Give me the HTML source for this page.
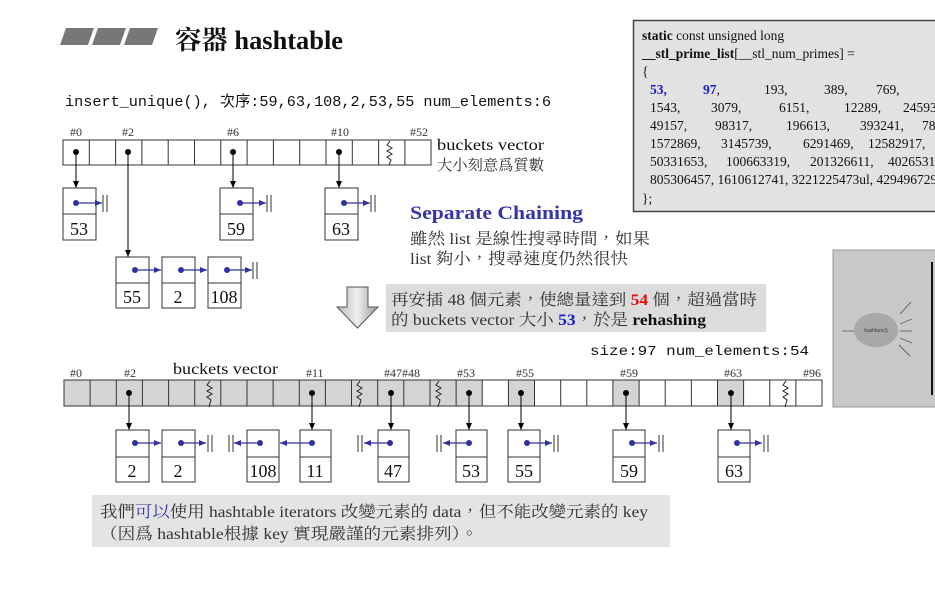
<!DOCTYPE html>
<html><head><meta charset="utf-8">
<style>
html,body{margin:0;padding:0;background:#fff;}
body{width:935px;height:602px;overflow:hidden;position:relative;}
svg{position:absolute;left:0;top:0;}
.t{font-family:"Liberation Serif","Noto Serif CJK TC","Noto Serif CJK SC",serif;}
.m{font-family:"Liberation Mono","DejaVu Sans Mono","Noto Sans CJK TC",monospace;}
</style></head><body>
<svg width="935" height="602" viewBox="0 0 935 602" xmlns="http://www.w3.org/2000/svg">
<defs>
<marker id="ab" markerWidth="8" markerHeight="8" refX="7" refY="4" orient="auto" markerUnits="userSpaceOnUse"><path d="M0,1 L7,4 L0,7 z" fill="#000"/></marker>
<marker id="au" markerWidth="8" markerHeight="8" refX="7" refY="4" orient="auto" markerUnits="userSpaceOnUse"><path d="M0,1 L7,4 L0,7 z" fill="#3030a0"/></marker>
<linearGradient id="ag" x1="0" x2="1"><stop offset="0" stop-color="#bbb"/><stop offset="0.5" stop-color="#eee"/><stop offset="1" stop-color="#999"/></linearGradient>
</defs>

<g fill="#777">
<polygon points="66,28 94,28 88,45 60,45"/>
<polygon points="98,28 126,28 120,45 92,45"/>
<polygon points="130,28 158,28 152,45 124,45"/>
</g>
<text x="175" y="49" class="t" font-size="26" font-weight="bold" fill="#111" textLength="168" lengthAdjust="spacingAndGlyphs">容器 hashtable</text>

<text x="65" y="106" class="m" font-size="15" fill="#111" textLength="486" lengthAdjust="spacingAndGlyphs">insert_unique(), 次序:59,63,108,2,53,55 num_elements:6</text>

<g class="t" font-size="12" fill="#333">
<text x="70" y="136">#0</text><text x="122" y="136">#2</text><text x="227" y="136">#6</text><text x="331" y="136">#10</text><text x="410" y="136">#52</text>
</g>
<g stroke="#333" stroke-width="1" fill="none">
<rect x="63" y="140" width="368" height="25" fill="#fff"/>
<path d="M89.3,140V165M115.6,140V165M141.9,140V165M168.2,140V165M194.5,140V165M220.8,140V165M247.1,140V165M273.4,140V165M299.7,140V165M326,140V165M352.3,140V165M378.6,140V165M404.9,140V165"/>
</g>
<path d="M390,141 l-3,4 l5,3 l-5,3 l5,3 l-5,3 l4,3 l-2,5" stroke="#222" fill="none" stroke-width="1"/>
<g fill="#000">
<circle cx="76" cy="152" r="3"/><circle cx="128" cy="152" r="3"/><circle cx="233" cy="152" r="3"/><circle cx="339" cy="152" r="3"/>
</g>
<g stroke="#000" stroke-width="1" marker-end="url(#ab)">
<line x1="76" y1="152" x2="76" y2="188"/><line x1="128" y1="152" x2="128" y2="257"/><line x1="233" y1="152" x2="233" y2="188"/><line x1="339" y1="152" x2="339" y2="188"/>
</g>
<text x="437" y="150" class="t" font-size="16" fill="#111" textLength="107" lengthAdjust="spacingAndGlyphs">buckets  vector</text>
<text x="437" y="170" class="t" font-size="15" fill="#333" textLength="107" lengthAdjust="spacingAndGlyphs">大小刻意爲質數</text>

<g stroke="#333" fill="#fff" stroke-width="1">
<rect x="63" y="188" width="33" height="52"/><line x1="63" y1="214" x2="96" y2="214"/>
<rect x="220" y="188" width="33" height="52"/><line x1="220" y1="214" x2="253" y2="214"/>
<rect x="325" y="188" width="33" height="52"/><line x1="325" y1="214" x2="358" y2="214"/>
<rect x="116" y="257" width="33" height="51"/><line x1="116" y1="283" x2="149" y2="283"/>
<rect x="162" y="257" width="33" height="51"/><line x1="162" y1="283" x2="195" y2="283"/>
<rect x="208" y="257" width="33" height="51"/><line x1="208" y1="283" x2="241" y2="283"/>
</g>
<g fill="#3030a0">
<circle cx="76" cy="203" r="3"/><circle cx="240" cy="203" r="3"/><circle cx="344" cy="203" r="3"/>
<circle cx="135" cy="270" r="3"/><circle cx="181" cy="270" r="3"/><circle cx="227" cy="270" r="3"/>
</g>
<g stroke="#3030a0" stroke-width="1.2" marker-end="url(#au)">
<line x1="76" y1="203" x2="102" y2="203"/><line x1="240" y1="203" x2="266" y2="203"/><line x1="344" y1="203" x2="370" y2="203"/>
<line x1="135" y1="270" x2="161" y2="270"/><line x1="181" y1="270" x2="207" y2="270"/><line x1="227" y1="270" x2="252" y2="270"/>
</g>
<g stroke="#333" stroke-width="1">
<path d="M103,195V212M107,195V212M267,195V212M271,195V212M371,195V212M375,195V212M253,262V279M257,262V279"/>
</g>
<g class="t" font-size="18" fill="#111" text-anchor="middle">
<text x="79" y="235">53</text><text x="236" y="235">59</text><text x="341" y="235">63</text>
<text x="132" y="303">55</text><text x="178" y="303">2</text><text x="224" y="303">108</text>
</g>

<text x="410" y="219" class="t" font-size="19" font-weight="bold" fill="#3535a8" textLength="173" lengthAdjust="spacingAndGlyphs">Separate Chaining</text>
<text x="410" y="244" class="t" font-size="16" fill="#333" textLength="240" lengthAdjust="spacingAndGlyphs">雖然 list 是線性搜尋時間，如果</text>
<text x="410" y="264" class="t" font-size="16" fill="#333" textLength="218" lengthAdjust="spacingAndGlyphs">list 夠小，搜尋速度仍然很快</text>

<rect x="633.5" y="20.5" width="310" height="191" fill="#e2e2e2" stroke="#444" stroke-width="1.5"/>
<g class="t" font-size="13.5" fill="#111">
<text x="642" y="40"><tspan font-weight="bold">static</tspan> const unsigned long</text>
<text x="642" y="58"><tspan font-weight="bold">__stl_prime_list</tspan>[__stl_num_primes] =</text>
<text x="642" y="76">{</text>
<text x="650" y="94" font-weight="bold" fill="#1a1acc">53,</text>
<text x="703" y="94"><tspan font-weight="bold" fill="#1a1acc">97</tspan>,</text>
<text x="764" y="94">193,</text><text x="824" y="94">389,</text><text x="876" y="94">769,</text>
<text x="650" y="112">1543,</text><text x="711" y="112">3079,</text><text x="779" y="112">6151,</text><text x="844" y="112">12289,</text><text x="903" y="112">24593,</text>
<text x="650" y="130">49157,</text><text x="715" y="130">98317,</text><text x="786" y="130">196613,</text><text x="860" y="130">393241,</text><text x="922" y="130">786433,</text>
<text x="650" y="148">1572869,</text><text x="721" y="148">3145739,</text><text x="803" y="148">6291469,</text><text x="868" y="148">12582917,</text>
<text x="650" y="166">50331653,</text><text x="726" y="166">100663319,</text><text x="810" y="166">201326611,</text><text x="888" y="166">402653189,</text>
<text x="650" y="184">805306457, 1610612741, 3221225473ul, 4294967291ul</text>
<text x="642" y="203">};</text>
</g>

<polygon points="347,287 368,287 368,307 378,307 357.5,328 337,307 347,307" fill="url(#ag)" stroke="#555" stroke-width="1"/>
<rect x="386" y="284" width="380" height="48" fill="#dcdcdc"/>
<g class="t" font-size="16" fill="#333">
<text x="391" y="305" textLength="366" lengthAdjust="spacingAndGlyphs">再安插 48 個元素，使總量達到 <tspan fill="#e01010" font-weight="bold">54</tspan> 個，超過當時</text>
<text x="391" y="325" textLength="315" lengthAdjust="spacingAndGlyphs">的 buckets vector 大小 <tspan fill="#1a1acc" font-weight="bold">53</tspan>，於是 <tspan font-weight="bold" fill="#111">rehashing</tspan></text>
</g>

<text x="590" y="355" class="m" font-size="14" fill="#111" textLength="219" lengthAdjust="spacingAndGlyphs">size:97  num_elements:54</text>

<rect x="833" y="250" width="110" height="157" fill="#c8c8c8" stroke="#999"/>
<line x1="932" y1="262" x2="932" y2="395" stroke="#111" stroke-width="2"/>
<ellipse cx="876" cy="330" rx="22" ry="17" fill="#a8a8a8"/>
<text x="876" y="332" font-family="Liberation Sans,sans-serif" font-size="5" text-anchor="middle" fill="#333">hashfunc()</text>
<g stroke="#333" stroke-width="0.6">
<line x1="842" y1="331" x2="854" y2="331"/><line x1="900" y1="331" x2="912" y2="331"/>
<line x1="900" y1="314" x2="911" y2="302"/><line x1="900" y1="324" x2="912" y2="319"/>
<line x1="900" y1="338" x2="912" y2="343"/><line x1="899" y1="345" x2="910" y2="356"/>
</g>

<g class="t" font-size="12" fill="#333">
<text x="70" y="377">#0</text><text x="124" y="377">#2</text><text x="306" y="377">#11</text><text x="384" y="377">#47#48</text>
<text x="457" y="377">#53</text><text x="516" y="377">#55</text><text x="620" y="377">#59</text><text x="724" y="377">#63</text><text x="803" y="377">#96</text>
</g>
<text x="173" y="374" class="t" font-size="16" fill="#111" textLength="105" lengthAdjust="spacingAndGlyphs">buckets  vector</text>
<g fill="#d4d4d4">
<rect x="64" y="380" width="418.2" height="26"/>
<rect x="508.4" y="380" width="26.14" height="26"/>
<rect x="612.9" y="380" width="26.14" height="26"/>
<rect x="717.5" y="380" width="26.14" height="26"/>
</g>
<rect x="64" y="380" width="758" height="26" fill="none" stroke="#333"/>
<path stroke="#333" d="M90.1,380V406M116.3,380V406M142.4,380V406M168.6,380V406M194.7,380V406M220.8,380V406M247,380V406M273.1,380V406M299.3,380V406M325.4,380V406M351.5,380V406M377.7,380V406M403.8,380V406M430,380V406M456.1,380V406M482.2,380V406M508.4,380V406M534.5,380V406M560.7,380V406M586.8,380V406M612.9,380V406M639.1,380V406M665.2,380V406M691.4,380V406M717.5,380V406M743.6,380V406M769.8,380V406M795.9,380V406"/>
<g stroke="#222" fill="none">
<path d="M210,381 l-3,4 l5,3 l-5,3 l5,3 l-5,3 l4,3 l-2,7"/>
<path d="M360,381 l-3,4 l5,3 l-5,3 l5,3 l-5,3 l4,3 l-2,7"/>
<path d="M439,381 l-3,4 l5,3 l-5,3 l5,3 l-5,3 l4,3 l-2,7"/>
<path d="M786,381 l-3,4 l5,3 l-5,3 l5,3 l-5,3 l4,3 l-2,7"/>
</g>
<g fill="#000">
<circle cx="129" cy="393" r="3"/><circle cx="312" cy="393" r="3"/><circle cx="391" cy="393" r="3"/><circle cx="469" cy="393" r="3"/>
<circle cx="521" cy="393" r="3"/><circle cx="626" cy="393" r="3"/><circle cx="731" cy="393" r="3"/>
</g>
<g stroke="#000" marker-end="url(#ab)">
<line x1="129" y1="393" x2="129" y2="430"/><line x1="312" y1="393" x2="312" y2="430"/><line x1="391" y1="393" x2="391" y2="430"/><line x1="469" y1="393" x2="469" y2="430"/>
<line x1="521" y1="393" x2="521" y2="430"/><line x1="626" y1="393" x2="626" y2="430"/><line x1="731" y1="393" x2="731" y2="430"/>
</g>
<g stroke="#333" fill="#fff">
<rect x="116" y="430" width="33" height="52"/><line x1="116" y1="457" x2="149" y2="457"/>
<rect x="162" y="430" width="33" height="52"/><line x1="162" y1="457" x2="195" y2="457"/>
<rect x="247" y="430" width="32" height="52"/><line x1="247" y1="457" x2="279" y2="457"/>
<rect x="300" y="430" width="31" height="52"/><line x1="300" y1="457" x2="331" y2="457"/>
<rect x="378" y="430" width="31" height="52"/><line x1="378" y1="457" x2="409" y2="457"/>
<rect x="456" y="430" width="31" height="52"/><line x1="456" y1="457" x2="487" y2="457"/>
<rect x="508" y="430" width="32" height="52"/><line x1="508" y1="457" x2="540" y2="457"/>
<rect x="613" y="430" width="32" height="52"/><line x1="613" y1="457" x2="645" y2="457"/>
<rect x="718" y="430" width="32" height="52"/><line x1="718" y1="457" x2="750" y2="457"/>
</g>
<g fill="#3030a0">
<circle cx="135" cy="443" r="3"/><circle cx="181" cy="443" r="3"/><circle cx="260" cy="443" r="3"/><circle cx="312" cy="443" r="3"/>
<circle cx="390" cy="443" r="3"/><circle cx="469" cy="443" r="3"/><circle cx="527" cy="443" r="3"/><circle cx="632" cy="443" r="3"/><circle cx="737" cy="443" r="3"/>
</g>
<g stroke="#3030a0" stroke-width="1.2" marker-end="url(#au)">
<line x1="135" y1="443" x2="161" y2="443"/><line x1="181" y1="443" x2="206" y2="443"/>
<line x1="260" y1="443" x2="234" y2="443"/><line x1="312" y1="443" x2="280" y2="443"/>
<line x1="390" y1="443" x2="364" y2="443"/><line x1="469" y1="443" x2="443" y2="443"/>
<line x1="527" y1="443" x2="552" y2="443"/><line x1="632" y1="443" x2="657" y2="443"/><line x1="737" y1="443" x2="762" y2="443"/>
</g>
<path stroke="#333" d="M208,435V452M212,435V452M229,435V452M233,435V452M358,435V452M362,435V452M437,435V452M441,435V452M554,435V452M558,435V452M659,435V452M663,435V452M764,435V452M768,435V452"/>
<g class="t" font-size="18" fill="#111" text-anchor="middle">
<text x="132" y="477">2</text><text x="178" y="477">2</text><text x="263" y="477">108</text><text x="315" y="477">11</text>
<text x="393" y="477">47</text><text x="471" y="477">53</text><text x="524" y="477">55</text><text x="629" y="477">59</text><text x="734" y="477">63</text>
</g>

<rect x="92" y="495" width="578" height="52" fill="#e4e4e4"/>
<g class="t" font-size="16" fill="#333">
<text x="100" y="517" textLength="548" lengthAdjust="spacingAndGlyphs">我們<tspan fill="#3535a8">可以</tspan>使用 hashtable iterators 改變元素的 data，但不能改變元素的 key</text>
<text x="100" y="539" textLength="378" lengthAdjust="spacingAndGlyphs">（因爲 hashtable根據 key 實現嚴謹的元素排列）。</text>
</g>
</svg>
</body></html>
